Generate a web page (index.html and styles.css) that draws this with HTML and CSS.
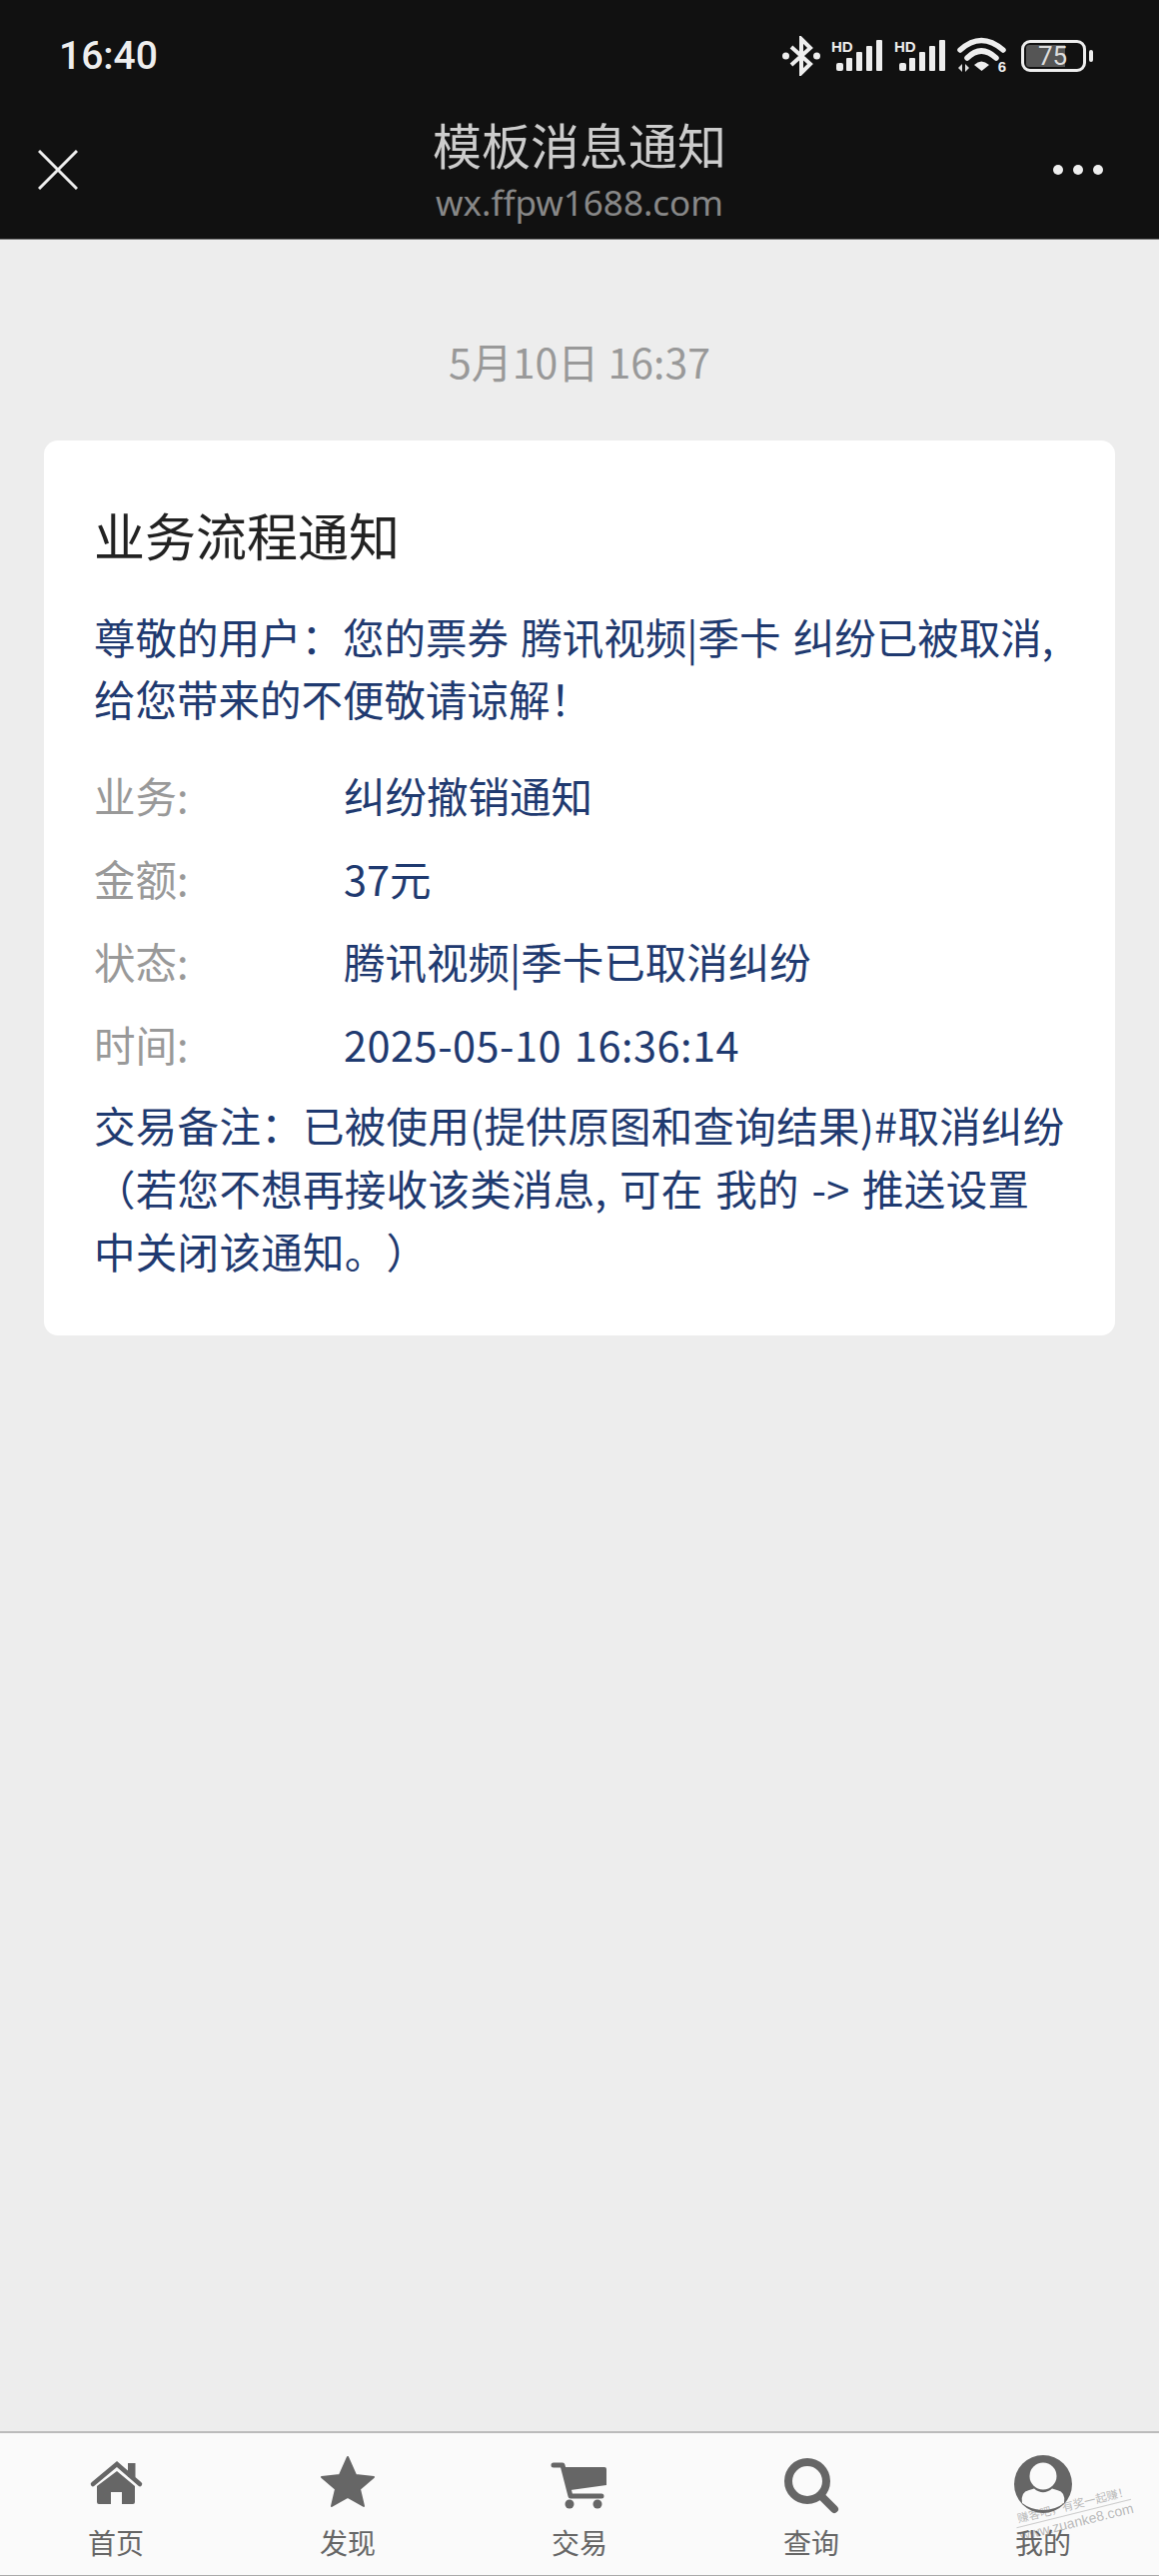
FILE: index.html
```html
<!DOCTYPE html>
<html lang="zh-CN">
<head>
  <meta charset="UTF-8">
  <meta name="viewport" content="width=device-width, initial-scale=1.0">
  <title>模板消息通知</title>
  <link rel="stylesheet" href="styles.css">
</head>
<body>
  <div class="container">
    <header class="topbar">
      <div class="statusbar">
        <span class="clock">16:40</span>
        <div class="status-icons">
          <svg class="icon-bt" viewBox="0 0 38 40">
            <polyline points="9,11 28,28 19,37 19,3 28,12 9,29" fill="none" stroke="#eee" stroke-width="4"/>
            <circle cx="3.5" cy="20" r="3.5" fill="#eee"/>
            <circle cx="34.5" cy="20" r="3.5" fill="#eee"/>
          </svg>
          <svg class="icon-signal" viewBox="0 0 52 34">
            <text x="0" y="13" class="hd">HD</text>
            <rect x="5" y="24" width="7" height="8" rx="2" fill="#eee"/>
            <rect x="15" y="19" width="6" height="13" rx="1" fill="#eee"/>
            <rect x="25" y="13" width="6" height="19" rx="1" fill="#eee"/>
            <rect x="35" y="7" width="6" height="25" rx="1" fill="#eee"/>
            <rect x="45" y="1" width="6" height="31" rx="1" fill="#eee"/>
          </svg>
          <svg class="icon-signal" viewBox="0 0 52 34">
            <text x="0" y="13" class="hd">HD</text>
            <rect x="5" y="24" width="7" height="8" rx="2" fill="#eee"/>
            <rect x="15" y="19" width="6" height="13" rx="1" fill="#eee"/>
            <rect x="25" y="13" width="6" height="19" rx="1" fill="#eee"/>
            <rect x="35" y="7" width="6" height="25" rx="1" fill="#eee"/>
            <rect x="45" y="1" width="6" height="31" rx="1" fill="#eee"/>
          </svg>
          <div class="wifi">
            <svg class="icon-wifi" viewBox="0 0 49 37">
              <path d="M3 13 Q24 -6 46 13" fill="none" stroke="#eee" stroke-width="5.5" stroke-linecap="round"/>
              <path d="M10 21 Q24 7 39 21" fill="none" stroke="#eee" stroke-width="5.5" stroke-linecap="round"/>
              <path d="M17 28 Q24 21 32 28 L24.5 34 Z" fill="#eee"/>
              <path d="M1 31 L5 27 V35 Z M8 27 L12 31 L8 35 Z" fill="#ddd"/>
            </svg>
            <span class="wifi-six">6</span>
          </div>
          <div class="battery">
            <div class="battery-body">
              <div class="battery-fill"></div>
              <span class="battery-num">75</span>
            </div>
            <div class="battery-tip"></div>
          </div>
        </div>
      </div>
      <nav class="navbar">
        <svg class="icon-close" viewBox="0 0 40 40">
          <path d="M1 1 L39 39 M39 1 L1 39" stroke="#eee" stroke-width="3"/>
        </svg>
        <div class="nav-title">
          <h1>模板消息通知</h1>
          <p>wx.ffpw1688.com</p>
        </div>
        <div class="nav-more">
          <span></span><span></span><span></span>
        </div>
      </nav>
    </header>

    <main class="main">
      <div class="msg-date">5月10日 16:37</div>
      <section class="card">
        <h2>业务流程通知</h2>
        <p class="card-intro">尊敬的用户：您的票券 腾讯视频|季卡 纠纷已被取消,<br>给您带来的不便敬请谅解！</p>
        <div class="card-row"><span class="row-label">业务:</span><span class="row-value">纠纷撤销通知</span></div>
        <div class="card-row"><span class="row-label">金额:</span><span class="row-value">37元</span></div>
        <div class="card-row"><span class="row-label">状态:</span><span class="row-value">腾讯视频|季卡已取消纠纷</span></div>
        <div class="card-row"><span class="row-label">时间:</span><span class="row-value row-time">2025-05-10 16:36:14</span></div>
        <p class="card-note">交易备注：已被使用(提供原图和查询结果)#取消纠纷<br>（若您不想再接收该类消息, 可在 我的 -&gt; 推送设置<br>中关闭该通知。）</p>
      </section>
    </main>

    <footer class="tabbar">
      <div class="tab">
        <svg viewBox="0 0 60 60">
          <path d="M7 30 L31 10 L54 30" fill="none" stroke="#666" stroke-width="4.5" stroke-linecap="round"/>
          <rect x="42" y="9" width="7.5" height="14" fill="#666"/>
          <path d="M31 17 L49 32 V48 Q49 50 47 50 H36 V38 H25 V50 H13 Q11 50 11 48 V32 Z" fill="#666"/>
        </svg>
        <span>首页</span>
      </div>
      <div class="tab">
        <svg viewBox="0 0 60 60">
          <polygon points="30,3 38,21 56,23 42,35 46,52 30,43 14,52 18,35 4,23 22,21" fill="#666" stroke="#666" stroke-width="2" stroke-linejoin="round"/>
        </svg>
        <span>发现</span>
      </div>
      <div class="tab">
        <svg viewBox="0 0 60 60">
          <path d="M4 11 H13 L21 42 H52" fill="none" stroke="#666" stroke-width="5" stroke-linecap="round" stroke-linejoin="round"/>
          <path d="M15 13 H55 Q57 13 57 15 V31 L21 36 Z" fill="#666"/>
          <circle cx="20" cy="50" r="4.5" fill="#666"/>
          <circle cx="48" cy="50" r="4.5" fill="#666"/>
        </svg>
        <span>交易</span>
      </div>
      <div class="tab">
        <svg viewBox="0 0 60 60">
          <circle cx="26" cy="27" r="19" fill="none" stroke="#666" stroke-width="8"/>
          <path d="M41 43 L53 55" stroke="#666" stroke-width="8" stroke-linecap="round"/>
        </svg>
        <span>查询</span>
      </div>
      <div class="tab">
        <svg viewBox="0 0 60 60">
          <circle cx="30" cy="30" r="29" fill="#666"/>
          <circle cx="30" cy="22" r="13.5" fill="#fafafa"/>
          <path d="M9 49 Q7 38 16 36 L21 34.5 Q30 42 39 34.5 L44 36 Q53 38 51 49 Q42 56 30 56 Q18 56 9 49 Z" fill="#fafafa"/>
        </svg>
        <span>我的</span>
      </div>
      <div class="watermark">
        <div class="watermark-top">赚客吧，有奖一起赚！</div>
        <div class="watermark-url">www.zuanke8.com</div>
      </div>
    </footer>
  </div>
</body>
</html>
```

FILE: styles.css
```css
/* General Styles */
* {
  box-sizing: border-box;
}

body {
  margin: 0;
  font-family: "Noto Sans CJK SC", "Noto Sans", sans-serif;
  background-color: #ededed;
}

.container {
  display: flex;
  flex-direction: column;
  height: 100vh;
}

/* Top Bar */
.topbar {
  background-color: #111;
  height: 240px;
  border-bottom: 1px solid #777;
}

.statusbar {
  display: flex;
  justify-content: space-between;
  align-items: center;
  height: 110px;
  padding: 1px 66px 0 59px;
}

.clock {
  font-family: Roboto, sans-serif;
  font-size: 39px;
  font-weight: 500;
  color: #eee;
}

.status-icons {
  display: flex;
  align-items: center;
  gap: 11px;
}

.icon-bt {
  width: 38px;
  height: 40px;
}

.icon-signal {
  width: 52px;
  height: 34px;
}

.icon-wifi {
  display: block;
  width: 49px;
  height: 37px;
}

.hd {
  font-family: "Liberation Sans", sans-serif;
  font-size: 15px;
  font-weight: bold;
  fill: #eee;
}

.wifi {
  position: relative;
}

.wifi-six {
  position: absolute;
  right: 0;
  bottom: 0;
  font-family: "Liberation Sans", sans-serif;
  font-size: 15px;
  font-weight: bold;
  line-height: 15px;
  color: #eee;
}

.battery {
  display: flex;
  align-items: center;
  gap: 3px;
  margin-left: 4px;
}

.battery-body {
  position: relative;
  display: flex;
  align-items: center;
  justify-content: center;
  width: 65px;
  height: 32px;
  padding-right: 2px;
  border: 3px solid #eee;
  border-radius: 9px;
}

.battery-fill {
  position: absolute;
  top: 2px;
  bottom: 2px;
  left: 2px;
  width: 39px;
  border-radius: 3px 0 0 3px;
  background-color: #555;
}

.battery-num {
  position: relative;
  font-family: Roboto, sans-serif;
  font-size: 26px;
  line-height: 26px;
  color: #ddd;
}

.battery-tip {
  width: 4px;
  height: 12px;
  border-radius: 2px;
  background-color: #eee;
}

.navbar {
  display: grid;
  grid-template-columns: 1fr auto 1fr;
  align-items: center;
  height: 120px;
  padding: 0 56px;
}

.icon-close {
  width: 40px;
  height: 40px;
  margin-left: -18px;
}

.nav-title {
  text-align: center;
}

.nav-title h1 {
  margin: -1px 0 9px;
  font-size: 49px;
  font-weight: 400;
  line-height: 58px;
  color: #ccc;
}

.nav-title p {
  margin: 0;
  font-family: "Noto Sans", sans-serif;
  font-size: 35px;
  line-height: 42px;
  color: #888;
}

.nav-more {
  display: flex;
  justify-content: flex-end;
  gap: 10px;
}

.nav-more span {
  width: 10px;
  height: 10px;
  border-radius: 50%;
  background-color: #eee;
}

/* Main Content */
.main {
  flex: 1;
  padding: 91px 44px 0;
}

.msg-date {
  height: 60px;
  margin-bottom: 50px;
  text-align: center;
  font-size: 41px;
  line-height: 60px;
  color: #999;
}

.card {
  background-color: #fff;
  border-radius: 14px;
  padding: 59px 40px 53px 50px;
  font-size: 41.5px;
  word-spacing: 3px;
  text-spacing-trim: space-all;
  color: #1f3a70;
}

.card h2 {
  margin: 0 0 36px;
  font-size: 51px;
  font-weight: 400;
  line-height: 70px;
  color: #222;
}

.card-intro {
  margin: 0 0 24px;
  line-height: 62px;
}

.card-row {
  display: flex;
  align-items: center;
  height: 83px;
}

.row-label {
  width: 250px;
  color: #999;
}

.row-time {
  letter-spacing: 0.5px;
}

.card-note {
  margin: 9px 0 0;
  line-height: 63px;
  letter-spacing: 0.3px;
}

/* Tab Bar */
.tabbar {
  position: relative;
  display: grid;
  grid-template-columns: repeat(5, 1fr);
  height: 145px;
  padding-top: 21px;
  background-color: #fafafa;
  border-top: 2px solid #bbb;
  border-bottom: 1px solid #aaa;
  overflow: hidden;
}

.tab {
  display: flex;
  flex-direction: column;
  align-items: center;
  font-size: 28px;
  line-height: 40px;
  color: #666;
}

.tab svg {
  width: 60px;
  height: 60px;
  margin-bottom: 8px;
}

.watermark {
  position: absolute;
  top: 65px;
  right: 26px;
  width: 118px;
  transform: rotate(-14deg);
  font-family: "Liberation Sans", "Noto Sans CJK SC", sans-serif;
  white-space: nowrap;
  text-align: right;
  color: rgba(120, 120, 120, 0.5);
}

.watermark-top {
  font-size: 11.5px;
  line-height: 15px;
  border-bottom: 1px solid rgba(120, 120, 120, 0.35);
}

.watermark-url {
  font-size: 14px;
  line-height: 17px;
}
```
